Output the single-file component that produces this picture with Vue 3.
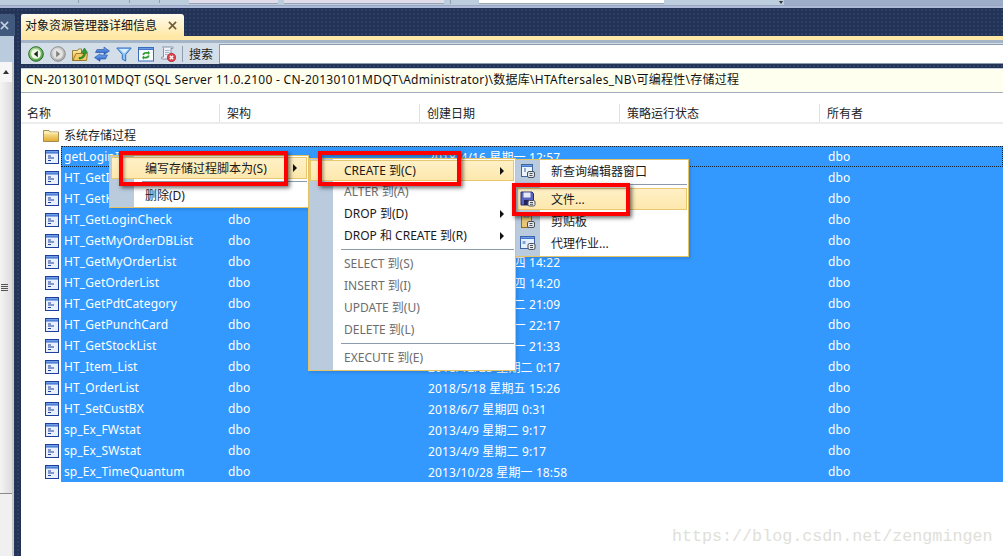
<script setup>
const rows = [
  ['getLoginInfo', '2018/4/16 星期一 12:57'],
  ['HT_GetInfo', '2018/4/16 星期一 12:57'],
  ['HT_GetKind', '2018/4/16 星期一 12:57'],
  ['HT_GetLoginCheck', '2018/4/16 星期一 12:57'],
  ['HT_GetMyOrderDBList', '2018/4/16 星期一 12:57'],
  ['HT_GetMyOrderList', '2018/5/17 星期四 14:22'],
  ['HT_GetOrderList', '2018/5/17 星期四 14:20'],
  ['HT_GetPdtCategory', '2018/5/15 星期二 21:09'],
  ['HT_GetPunchCard', '2018/5/14 星期一 22:17'],
  ['HT_GetStockList', '2018/5/14 星期一 21:33'],
  ['HT_Item_List', '2018/12/25 星期二 0:17'],
  ['HT_OrderList', '2018/5/18 星期五 15:26'],
  ['HT_SetCustBX', '2018/6/7 星期四 0:31'],
  ['sp_Ex_FWstat', '2013/4/9 星期二 9:17'],
  ['sp_Ex_SWstat', '2013/4/9 星期二 9:17'],
  ['sp_Ex_TimeQuantum', '2013/10/28 星期一 18:58'],
]
const tools = ['back', 'forward', 'folderup', 'sync', 'funnel', 'refresh', 'script']
const columns = ['名称', '架构', '创建日期', '策略运行状态', '所有者']
const menu2 = [
  { t: 'CREATE 到(C)', hot: true, sub: true },
  { t: 'ALTER 到(A)', off: true },
  { t: 'DROP 到(D)', sub: true },
  { t: 'DROP 和 CREATE 到(R)', sub: true },
  { sep: true },
  { t: 'SELECT 到(S)', off: true },
  { t: 'INSERT 到(I)', off: true },
  { t: 'UPDATE 到(U)', off: true },
  { t: 'DELETE 到(L)', off: true },
  { sep: true },
  { t: 'EXECUTE 到(E)', off: true },
]
const menu3 = [
  { t: '新查询编辑器窗口', icon: 'mquery' },
  { sep: true },
  { t: '文件...', icon: 'mfile', hot: true },
  { t: '剪贴板', icon: 'mclip' },
  { t: '代理作业...', icon: 'magent' },
]
</script>

<template>
  <div class="root">
    <svg class="defs" width="0" height="0">
      <defs>
        <linearGradient id="gTitle" x1="0" y1="0" x2="0" y2="1"><stop offset="0" stop-color="#7fb0ee"/><stop offset="1" stop-color="#2f64c8"/></linearGradient>
        <radialGradient id="gGreen" cx=".4" cy=".35" r=".7"><stop offset="0" stop-color="#d8f5b8"/><stop offset="1" stop-color="#3f9a3a"/></radialGradient>
        <radialGradient id="gGrey" cx=".4" cy=".35" r=".7"><stop offset="0" stop-color="#eeeeee"/><stop offset="1" stop-color="#a8a8a8"/></radialGradient>
        <linearGradient id="gFolder" x1="0" y1="0" x2="0" y2="1"><stop offset="0" stop-color="#fff3b8"/><stop offset="1" stop-color="#e2a92e"/></linearGradient>
        <linearGradient id="gBlue" x1="0" y1="0" x2="0" y2="1"><stop offset="0" stop-color="#7fb4f5"/><stop offset="1" stop-color="#1f55c0"/></linearGradient>
      </defs>
      <symbol id="proc" viewBox="0 0 14 14">
        <rect x=".5" y=".5" width="13" height="13" fill="#e8f0fb" stroke="#1f3f9f"/>
        <rect x="1" y="1" width="12" height="2.5" fill="url(#gTitle)"/>
        <path d="M3 6h3M3 8h6M3 10.500h3" stroke="#1f3f9f" fill="none"/>
      </symbol>
      <symbol id="back" viewBox="0 0 16 16">
        <circle cx="8" cy="8" r="7.300" fill="url(#gGreen)" stroke="#2b6a2b"/>
        <circle cx="8" cy="8" r="4.800" fill="#eef8e4"/>
        <path d="M9.800 4.800 5.800 8l4 3.200z" fill="#1d2a1d"/>
      </symbol>
      <symbol id="forward" viewBox="0 0 16 16">
        <circle cx="8" cy="8" r="7.300" fill="url(#gGrey)" stroke="#8e8e8e"/>
        <circle cx="8" cy="8" r="4.800" fill="#e4e4e4"/>
        <path d="M6.200 4.800 10.200 8l-4 3.200z" fill="#7f7f7f"/>
      </symbol>
      <symbol id="folderup" viewBox="0 0 16 16">
        <path d="M.5 4.500h5l1-1.500h3v11.500H.5z" fill="url(#gFolder)" stroke="#8a6a1e" stroke-width=".8"/>
        <path d="M1 14.500h13.500l1-7H4z" fill="#f2cc62" stroke="#8a6a1e" stroke-width=".8"/>
        <path d="M7 11.500c3 0 4.500-1.500 4.500-5H9.500L12.500 2l3 4.500h-2c0 4-2 6.500-6.500 6.500z" fill="#2f9a2f" stroke="#156015" stroke-width=".5"/>
      </symbol>
      <symbol id="sync" viewBox="0 0 16 16">
        <path d="M3 3.500h7V1l5.500 4L10 8.500V6.500H1.500z" fill="url(#gBlue)" stroke="#1d4ba0" stroke-width=".6"/>
        <path d="M13.500 9H6V7.800L.5 11.500 6 15.300V13h5.500z" fill="url(#gBlue)" stroke="#1d4ba0" stroke-width=".6"/>
      </symbol>
      <symbol id="funnel" viewBox="0 0 16 16">
        <path d="M.8 2h14.400L9.700 8.500V15L6.300 13.200V8.500z" fill="#8fc4f2" stroke="#2f6fc0"/>
        <path d="M3.500 3h9L8.500 7.500z" fill="#d8eeff"/>
      </symbol>
      <symbol id="refresh" viewBox="0 0 16 16">
        <rect x=".5" y="1.500" width="15" height="13.500" fill="#f6fafe" stroke="#3a6db8"/>
        <rect x="1" y="2" width="14" height="2" fill="url(#gTitle)"/>
        <path d="M4.500 9c0-2 1.500-3 3.500-3l2 0V4.800L12 7 10 9V7.800H8c-1 0-1.600.4-1.700 1.200zM11.500 9.500c0 2-1.500 3-3.500 3H6v1.200L4 11.500l2-2v1.200h2c1 0 1.600-.4 1.700-1.200z" fill="#2f9a2f"/>
      </symbol>
      <symbol id="script" viewBox="0 0 16 16">
        <path d="M2.500 1h10c1 0 1 1.500 0 1.500H11V13H2.500C1 13 .8 11 2.500 11h1V2.500C3.500 1.800 3 1.500 2.500 1z" fill="#eef2f8" stroke="#6f7f94" stroke-width=".8"/>
        <path d="M5 4.500h4.500M5 6.500h4.500M5 8.500h3" stroke="#8ea0b8" stroke-width=".8"/>
        <circle cx="11.500" cy="11.500" r="4.200" fill="#e0404c" stroke="#a01c26" stroke-width=".6"/>
        <path d="M9.800 9.800l3.400 3.400m0-3.400-3.400 3.400" stroke="#fff" stroke-width="1.300"/>
      </symbol>
      <symbol id="folder" viewBox="0 0 16 14">
        <path d="M.5 2.500h5.500l1 1.500h8.500v9.500H.5z" fill="url(#gFolder)" stroke="#8f7a3c" stroke-width=".8"/>
        <path d="M1 5h14" stroke="#fff6c8"/>
      </symbol>
      <symbol id="mquery" viewBox="0 0 16 16">
        <rect x="1.500" y="1.500" width="11" height="12" fill="#eef4fb" stroke="#44679a"/>
        <rect x="2" y="2" width="10" height="2" fill="url(#gTitle)"/>
        <path d="M4 6h2M4 8h2" stroke="#44679a"/>
        <rect x="7.500" y="8.500" width="7" height="6" rx="1.500" fill="#dfe6ee" stroke="#4a4f58"/>
        <path d="M9.500 10.500h3M9.500 12.500h3" stroke="#4a4f58"/>
      </symbol>
      <symbol id="mfile" viewBox="0 0 16 16">
        <path d="M1 1h11l1.500 1.500V14H1z" fill="#5a62c0" stroke="#2a2e78"/>
        <rect x="3.500" y="1.500" width="7" height="5" fill="#e6e9f4"/>
        <rect x="4" y="9" width="5" height="5" fill="#23265c"/>
        <rect x="8" y="9.500" width="7" height="5.500" rx="1.500" fill="#e9edf2" stroke="#4a4f58"/>
        <path d="M10 11.500h3M10 13.300h3" stroke="#4a4f58"/>
      </symbol>
      <symbol id="mclip" viewBox="0 0 16 16">
        <rect x="1.500" y="2.500" width="10" height="12" fill="#e9c777" stroke="#8c6d25"/>
        <rect x="4" y="1" width="5" height="3" fill="#b6b6b6" stroke="#6e6e6e" stroke-width=".7"/>
        <rect x="7.500" y="8.500" width="7" height="6" rx="1.500" fill="#e6ebf0" stroke="#4a4f58"/>
        <path d="M9.500 10.500h3M9.500 12.500h3" stroke="#4a4f58"/>
      </symbol>
      <symbol id="magent" viewBox="0 0 16 16">
        <rect x=".5" y="1.500" width="14" height="12" fill="#e6effa" stroke="#3c63a8"/>
        <rect x="1" y="2" width="13" height="2" fill="url(#gTitle)"/>
        <rect x="2.500" y="6" width="3" height="3" fill="#7fa6dc"/>
        <rect x="8" y="8.500" width="7" height="6" rx="1.500" fill="#e6ebf0" stroke="#4a4f58"/>
        <path d="M10 10.500h3M10 12.500h3" stroke="#4a4f58"/>
      </symbol>
      <symbol id="xmark" viewBox="0 0 10 10">
        <path d="M1 1l8 8M9 1l-8 8" stroke="currentColor" stroke-width="1.700" fill="none"/>
      </symbol>
    </svg>

    <header class="topbar">
      <div class="topfields">
        <span class="tick t1"></span>
        <span class="tick t2"></span>
        <span class="tick t3"></span>
        <span class="field f1"></span>
        <span class="field f2"></span>
        <span class="tick t4"></span>
        <span class="field f3"></span>
        <span class="drop"></span>
      </div>
      <div class="topline"></div>
    </header>

    <div class="workspace">
      <aside class="side">
        <div class="sidetab"><svg class="sidex"><use href="#xmark"/></svg></div>
        <div class="sidehead"></div>
        <div class="sidebody">
          <div class="scroll">
            <div class="sbtn"><span class="uparrow"></span></div>
            <div class="thumb"><span class="grip"></span></div>
            <div class="track"></div>
          </div>
        </div>
      </aside>

      <main class="doc">
        <div class="tabs">
          <div class="tab">对象资源管理器详细信息<svg class="tabx"><use href="#xmark"/></svg></div>
        </div>
        <div class="band"></div>
        <div class="toolbar">
          <svg v-for="t in tools" :key="t" class="tool"><use :href="'#' + t"/></svg>
          <span class="tsep"></span>
          <span class="slabel">搜索</span>
          <div class="search"></div>
        </div>
        <div class="pathbar">CN-20130101MDQT (SQL Server 11.0.2100 - CN-20130101MDQT\Administrator)\数据库\HTAftersales_NB\可编程性\存储过程</div>
        <div class="heads">
          <div v-for="c in columns" :key="c" class="head">{{ c }}</div>
        </div>
        <div class="list">
          <div class="folderrow">
            <svg class="folderico"><use href="#folder"/></svg>
            <span>系统存储过程</span>
          </div>
          <div class="selwrap">
            <div v-for="(r, i) in rows" :key="r[0]" class="row">
              <svg class="proc"><use href="#proc"/></svg>
              <div class="cells" :class="{ focus: i === 0 }">
                <span class="c-name">{{ r[0] }}</span>
                <span class="c-schema">dbo</span>
                <span class="c-date">{{ r[1] }}</span>
                <span class="c-owner">dbo</span>
              </div>
            </div>
          </div>
        </div>
      </main>
    </div>

    <div class="menu m1">
      <div class="item hot"><span class="slot"></span><span class="lbl">编写存储过程脚本为(S)</span><span class="arr"></span></div>
      <div class="sep"></div>
      <div class="item"><span class="slot"></span><span class="lbl">删除(D)</span></div>
    </div>

    <div class="menu m2">
      <template v-for="(m, i) in menu2" :key="i">
        <div v-if="m.sep" class="sep"></div>
        <div v-else class="item" :class="{ hot: m.hot, off: m.off }">
          <span class="slot"></span><span class="lbl">{{ m.t }}</span><span v-if="m.sub" class="arr"></span>
        </div>
      </template>
    </div>

    <div class="menu m3">
      <template v-for="(m, i) in menu3" :key="i">
        <div v-if="m.sep" class="sep"></div>
        <div v-else class="item" :class="{ hot: m.hot }">
          <span class="slot"><svg class="micon"><use :href="'#' + m.icon"/></svg></span><span class="lbl">{{ m.t }}</span>
        </div>
      </template>
    </div>

    <div class="redbox r1"></div>
    <div class="redbox r2"></div>
    <div class="redbox r3"></div>

    <div class="watermark">https://blog.csdn.net/zengmingen</div>
  </div>
</template>

<style>
html, body { margin: 0; background: #fff; }
</style>

<style scoped>
.root {
  position: relative;
  width: 1003px;
  height: 556px;
  overflow: hidden;
  display: flex;
  flex-direction: column;
  font-family: "Noto Sans", "Noto Sans CJK SC", sans-serif;
  font-size: 12px;
  color: #1c1c1c;
}
.defs { position: absolute; }

.topbar { height: 8px; flex: none; background: #acb9d6; }
.topfields {
  height: 5px;
  display: flex;
  align-items: flex-start;
  background: linear-gradient(to right, #bccddd 784px, #9cadca 784px);
}
.topline { height: 1px; background: #97a5c2; }
.tick { width: 1px; height: 3px; background: #8f9fb2; flex: none; }
.t1 { margin-left: 78px; }
.t2 { margin-left: 50px; }
.t3 { margin-left: 29px; }
.t4 { margin-left: 6px; height: 4px; }
.field { height: 3px; flex: none; border-bottom: 1px solid #9aa5b4; background: #e0dcea; }
.f1 { width: 89px; margin-left: 29px; }
.f2 { width: 160px; margin-left: 6px; }
.f3 { width: 185px; margin-left: 28px; background: #fff; }
.drop {
  width: 0; height: 0; margin-left: 115px; margin-top: 1px;
  border: 2px solid transparent; border-top: 3px solid #333;
}

.workspace {
  flex: 1;
  min-height: 0;
  display: flex;
  background-color: #233355;
  background-image: radial-gradient(#2e4066 .8px, transparent .9px);
  background-size: 4px 4px;
}

.side { width: 14px; flex: none; margin-right: 7px; display: flex; flex-direction: column; padding-top: 6px; }
.sidetab {
  height: 22px; width: 15px; flex: none;
  background: #42597e;
  border-top-right-radius: 3px;
  color: #c3d0e0;
  display: flex;
  align-items: center;
}
.sidex { width: 9px; height: 9px; margin-left: 0; }
.sidehead { height: 26px; flex: none; background: #b9cbdd; }
.sidebody { flex: 1; min-height: 0; display: flex; background: #fff; }
.scroll { width: 12px; border-right: 2px solid #c9c9c9; display: flex; flex-direction: column; }
.sbtn { height: 20px; flex: none; display: flex; justify-content: center; align-items: center; background: #f6f6f6; }
.uparrow { width: 0; height: 0; border: 3px solid transparent; border-bottom: 4px solid #333; border-top: 0; }
.thumb {
  height: 412px; flex: none;
  background: linear-gradient(to right, #f4f4f4, #dcdcdc);
  border-bottom: 1px solid #8a8a8a;
  box-sizing: border-box;
  display: flex; align-items: center; padding-left: 1px;
}
.grip {
  width: 7px; height: 8px;
  background: repeating-linear-gradient(to bottom, #555 0 1px, #e8e8e8 1px 2px);
}
.track { flex: 1; background: #f0f0f0; }

.doc { flex: 1; min-width: 0; display: flex; flex-direction: column; }
.tabs { height: 28px; flex: none; padding-top: 6px; box-sizing: border-box; display: flex; }
.tab {
  width: 163px; height: 22px;
  box-sizing: border-box;
  padding-left: 4px;
  line-height: 23px;
  white-space: nowrap;
  border-radius: 2px 3px 0 0;
  background: linear-gradient(to bottom, #fffbee, #ffe9a8);
  color: #111;
  display: flex;
  align-items: center;
}
.tabx { width: 9px; height: 9px; margin-left: 11px; color: #6b5a35; flex: none; }
.band { height: 4px; flex: none; background: #ffe8a6; }
.toolbar {
  height: 24px;
  flex: none;
  box-sizing: border-box;
  border-top: 3px solid #a5b5c8;
  background: #d3dee9;
  display: flex;
  align-items: center;
  padding-left: 7px;
  gap: 6px;
}
.tool { width: 16px; height: 16px; flex: none; }
.tsep { width: 1px; height: 16px; background: #8e9eb0; flex: none; }
.slabel { color: #1c1c1c; }
.search {
  flex: 1; height: 20px; box-sizing: border-box;
  background: #fff; border: 1px solid #8a9bb0; border-right: 0;
}
.pathbar {
  margin-top: 4px;
  height: 25px;
  flex: none;
  box-sizing: border-box;
  background: #fffff0;
  border-top: 1px solid #c4cfdb;
  border-bottom: 1px solid #a3afbf;
  padding-left: 5px;
  line-height: 22px;
  white-space: nowrap;
  color: #111;
  letter-spacing: .27px;
}
.heads { height: 31px; flex: none; display: flex; background: #fff; border-bottom: 2px solid #ececec; box-sizing: border-box; }
.head {
  width: 200px; flex: none;
  box-sizing: border-box;
  padding-left: 7px;
  padding-top: 11px;
  color: #222;
  border-right: 1px solid transparent;
  border-image: linear-gradient(to bottom, #fff 40%, #dfe3e8 40%) 1;
}
.head:first-child { width: 199px; padding-left: 6px; }
.list { flex: 1; min-height: 0; background: #fff; display: flex; flex-direction: column; }
.folderrow { height: 21px; flex: none; display: flex; align-items: center; padding-left: 22px; margin-bottom: 1px; color: #1c1c1c; }
.folderico { width: 16px; height: 14px; margin-right: 5px; }
.selwrap { display: flex; flex-direction: column; }
.row { height: 21px; display: flex; align-items: center; }
.proc { width: 14px; height: 14px; margin-left: 24px; margin-right: 2px; flex: none; }
.cells {
  flex: 1; height: 21px;
  box-sizing: border-box;
  display: flex; align-items: center;
  background: #3399ff;
  color: #fff;
  padding-left: 3px;
  white-space: nowrap;
  letter-spacing: .12px;
}
.cells.focus { outline: 1px dotted #123; outline-offset: -1px; }
.c-name { width: 164px; flex: none; }
.c-schema { width: 200px; flex: none; }
.c-date { width: 400px; flex: none; }
.c-owner { flex: 1; }

.menu {
  position: absolute;
  box-sizing: border-box;
  border: 1px solid #e5c365;
  padding: 1px;
  background: linear-gradient(to right, #b9cbdd 24px, #fff 24px);
  box-shadow: 2px 2px 3px rgba(0, 0, 0, .12);
  color: #1a1a1a;
  white-space: nowrap;
}
.m1 { left: 109px; top: 155px; width: 200px; height: 53px; }
.m1 .sep { margin-bottom: 2px; }
.m2 { left: 308px; top: 158px; width: 208px; height: 213px; }
.m2 .item.hot { height: 21px; }
.m2 .lbl { padding-bottom: 3px; }
.m2 .item.hot .lbl { padding-bottom: 1px; }
.m3 { left: 515px; top: 159px; width: 174px; height: 98px; padding-top: 0; }
.item {
  height: 22px;
  box-sizing: border-box;
  display: flex;
  align-items: center;
  border: 1px solid transparent;
}
.item.hot { background: linear-gradient(to bottom, #fff0c6, #fde8ad); border-color: #e8c76e; }
.item.off { color: #6d6d6d; }
.slot { width: 20px; height: 16px; margin-right: 13px; flex: none; display: flex; justify-content: center; }
.micon { width: 16px; height: 16px; }
.lbl { flex: 1; }
.arr {
  width: 0; height: 0; margin-right: 9px;
  border: 4px solid transparent; border-left: 4px solid #111; border-right: 0;
}
.sep { height: 1px; margin: 2px 0 3px 31px; background: #8c9aab; }

.redbox {
  position: absolute;
  box-sizing: border-box;
  border: 4px solid #f00;
  box-shadow: 2px 2px 4px rgba(0, 0, 0, .55), inset 2px 2px 3px rgba(0, 0, 0, .3);
}
.r1 { left: 119px; top: 151px; width: 169px; height: 35px; }
.r2 { left: 318px; top: 151px; width: 143px; height: 35px; }
.r3 { left: 512px; top: 183px; width: 118px; height: 33px; }

.watermark {
  position: absolute;
  left: 672px;
  top: 527px;
  font-family: "Liberation Mono", monospace;
  font-size: 16.7px;
  color: #e0e0d8;
  white-space: nowrap;
}
</style>
